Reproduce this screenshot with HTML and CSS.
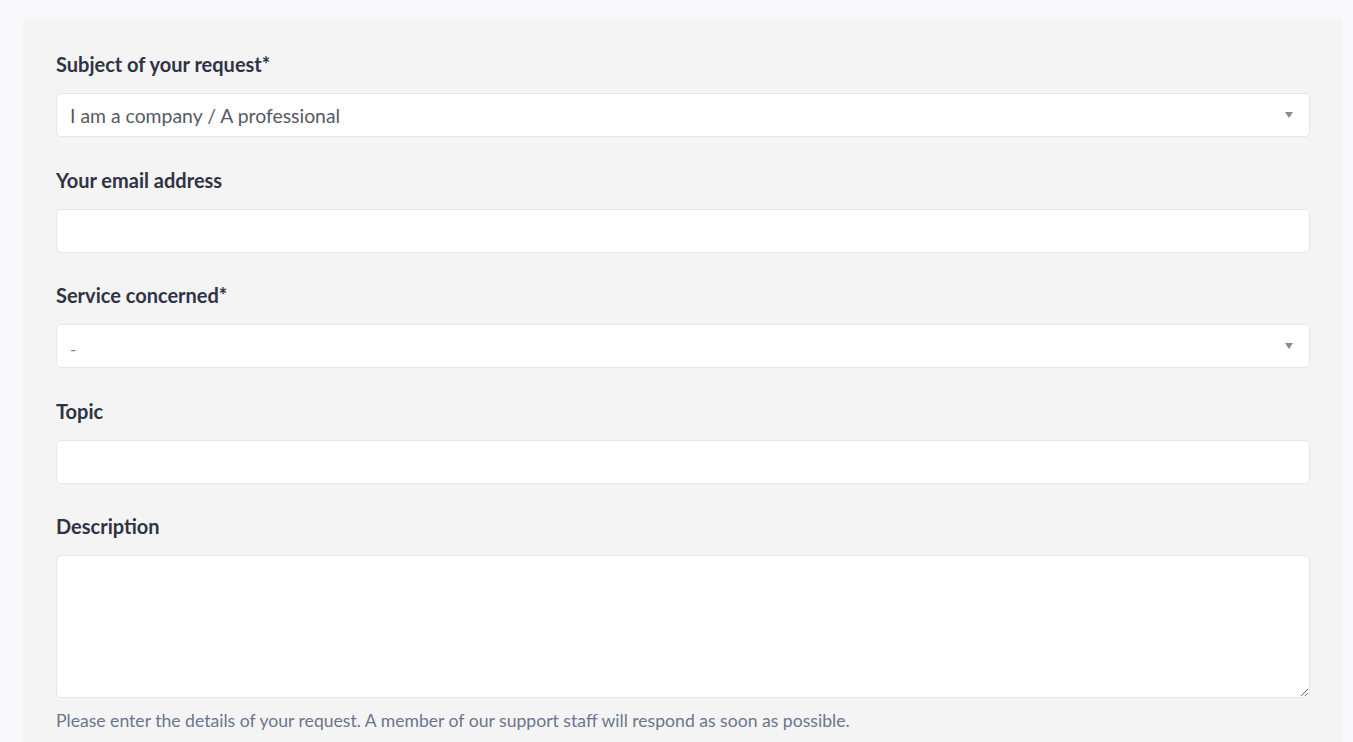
FILE: index.html
```html
<!DOCTYPE html>
<html lang="en">
<head>
<meta charset="utf-8">
<title>Contact</title>
<link rel="stylesheet" href="styles.css">
</head>
<body>
<div class="page">
  <form class="card">
    <div class="group">
      <label class="label">Subject of your request*</label>
      <div class="select">
        <span class="select-value">I am a company / A professional</span>
        <span class="caret"></span>
      </div>
    </div>
    <div class="group">
      <label class="label">Your email address</label>
      <input class="input" type="text">
    </div>
    <div class="group">
      <label class="label">Service concerned*</label>
      <div class="select">
        <span class="select-value dash">-</span>
        <span class="caret"></span>
      </div>
    </div>
    <div class="group">
      <label class="label">Topic</label>
      <input class="input" type="text">
    </div>
    <div class="group">
      <label class="label">Description</label>
      <textarea class="textarea"></textarea>
      <p class="help">Please enter the details of your request. A member of our support staff will respond as soon as possible.</p>
    </div>
  </form>
</div>
</body>
</html>
```
FILE: styles.css
```css
* { box-sizing: border-box; }
html, body { margin: 0; padding: 0; }
body {
  background: #f9f9fc;
  font-family: Lato, "Open Sans", sans-serif;
  color: #2f3344;
}
.page {
  padding: 17px 11px 0 23px;
}
.card {
  background: #f4f4f4;
  border-radius: 5px;
  padding: 33px 32px 40px 33px;
}
.group {
  margin-bottom: 28.5px;
}
.label {
  display: block;
  font-size: 20px;
  font-weight: 700;
  line-height: 28px;
  margin-bottom: 15px;
  color: #2f3344;
}
.select, .input, .textarea {
  display: block;
  width: 100%;
  background: #fff;
  border: 1px solid #e6e6e6;
  border-radius: 5px;
}
.select {
  height: 44px;
  display: flex;
  align-items: center;
  justify-content: space-between;
  padding: 0 16px 0 13px;
}
.select-value {
  font-size: 19.4px;
  color: #555a66;
}
.select-value.dash {
  color: #777;
  font-size: 16px;
  padding-top: 4px;
}
.caret {
  width: 0;
  height: 0;
  border-left: 4px solid transparent;
  border-right: 4px solid transparent;
  border-top: 6px solid #8a8a8a;
}
.input {
  height: 44px;
  font: inherit;
}
.textarea {
  height: 143px;
  font: inherit;
  resize: vertical;
}
.help {
  margin: 11px 0 0;
  font-size: 17.6px;
  line-height: 24px;
  color: #6b7590;
}
```
